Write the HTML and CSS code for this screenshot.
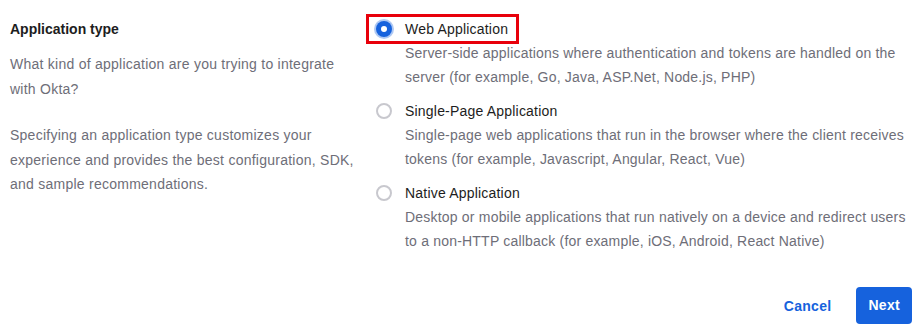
FILE: index.html
```html
<!DOCTYPE html>
<html>

<head>
    <meta charset="UTF-8">
    <title>Application type</title>
    <link rel="stylesheet" href="styles.css">
</head>

<body>
    <div class="page">
        <div class="section">
            <div class="intro">
                <h4>Application type</h4>
                <p>What kind of application are you trying to integrate with Okta?</p>
                <p>Specifying an application type customizes your experience and provides the best configuration, SDK, and sample recommendations.</p>
            </div>
            <ul class="options">
                <li class="option">
                    <label class="head marked">
                        <span class="radio checked"></span>
                        <span class="name">Web Application</span>
                    </label>
                    <p class="desc">Server-side applications where authentication and tokens are handled on the server (for example, Go, Java, ASP.Net, Node.js, PHP)</p>
                </li>
                <li class="option">
                    <label class="head">
                        <span class="radio"></span>
                        <span class="name">Single-Page Application</span>
                    </label>
                    <p class="desc">Single-page web applications that run in the browser where the client receives tokens (for example, Javascript, Angular, React, Vue)</p>
                </li>
                <li class="option">
                    <label class="head">
                        <span class="radio"></span>
                        <span class="name">Native Application</span>
                    </label>
                    <p class="desc">Desktop or mobile applications that run natively on a device and redirect users to a non-HTTP callback (for example, iOS, Android, React Native)</p>
                </li>
            </ul>
        </div>
        <div class="actions">
            <a href="javascript:;" class="cancel">Cancel</a>
            <a href="javascript:;" class="next">Next</a>
        </div>
    </div>
</body>

</html>
```

FILE: styles.css
```css
* {
    margin: 0;
    padding: 0;
    box-sizing: border-box;
}

body {
    background: #fff;
    font-family: "Liberation Sans", Arial, sans-serif;
    font-size: 14px;
    color: #1d1d21;
}

.page {
    padding: 17px 10px 0 10px;
}

.section {
    display: grid;
    grid-template-columns: 366px 1fr;
}

.intro h4 {
    font-size: 14px;
    font-weight: bold;
    line-height: 24px;
    color: #1d1d21;
}

.intro p {
    color: #6e6e78;
    line-height: 24.5px;
    letter-spacing: 0.25px;
    width: 345px;
    margin-top: 11px;
}

.intro p + p {
    margin-top: 22px;
}

.options {
    list-style: none;
}

.option {
    margin-bottom: 10px;
}

.option .head {
    display: inline-flex;
    align-items: center;
    gap: 13px;
    height: 24px;
    line-height: 24px;
    letter-spacing: 0.2px;
    color: #1d1d21;
}

.option .head.marked {
    padding: 0 8px 0 7px;
    margin-left: -7px;
    outline: 3px solid #e8000b;
}

.radio {
    width: 16px;
    height: 16px;
    border-radius: 50%;
    border: 2px solid #c8c8ce;
    background: #fff;
    position: relative;
}

.radio.checked {
    border: none;
    background: #1662dd;
    box-shadow: 0 0 0 2px rgba(22, 98, 221, 0.35);
}

.radio.checked::after {
    content: "";
    position: absolute;
    left: 5px;
    top: 5px;
    width: 6px;
    height: 6px;
    border-radius: 50%;
    background: #fff;
}

.option .desc {
    padding-left: 29px;
    color: #6e6e78;
    line-height: 24px;
    letter-spacing: 0.2px;
}

.actions {
    display: flex;
    justify-content: flex-end;
    align-items: center;
    margin-top: 24px;
}

.actions a {
    text-decoration: none;
    font-weight: bold;
    font-size: 14px;
    letter-spacing: 0.3px;
}

.cancel {
    color: #1662dd;
    padding: 0 12px;
    margin-right: 13px;
}

.next {
    display: block;
    background: #1662dd;
    color: #fff;
    height: 37px;
    line-height: 37px;
    padding: 0 12px;
    border-radius: 4px;
}
```
